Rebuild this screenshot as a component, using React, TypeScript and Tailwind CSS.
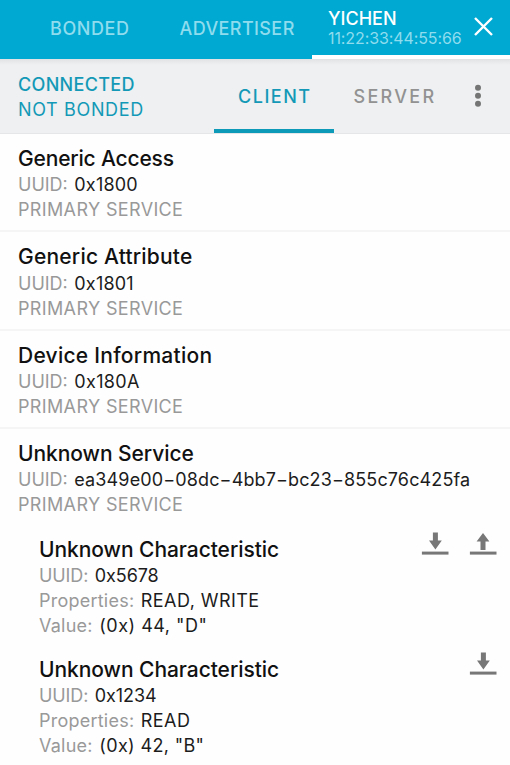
import React from "react";

type Field = { label: string; value?: string; labelTrack?: string; valueTrack?: string };

function Line({ label, value, labelTrack = "", valueTrack = "" }: Field) {
  return (
    <div className="flex h-[25px] items-center whitespace-pre text-[18px] leading-[25px]">
      <span className={`mr-[6.5px] text-[#999] ${labelTrack}`}>{label}</span>
      {value && <span className={`text-[#1c1c1c] ${valueTrack}`}>{value}</span>}
    </div>
  );
}

function Service({ name, uuid, track, uuidTrack, last }: { name: string; uuid: string; track: string; uuidTrack: string; last?: boolean }) {
  return (
    <section className={`px-[18px] pt-[11px] ${last ? "h-[98px]" : "h-[98.3px] border-b-2 border-[#f5f5f5]"}`}>
      <h2 className={`h-[27.3px] whitespace-nowrap text-[21px] font-medium leading-[28px] text-[#111] ${track}`}>{name}</h2>
      <Line label="UUID:" value={uuid} valueTrack={uuidTrack} />
      <Line label="PRIMARY SERVICE" labelTrack="tracking-[0.36px]" />
    </section>
  );
}

function Arrow({ up }: { up?: boolean }) {
  return (
    <svg className="-mt-[2.5px]" width="28" height="24" viewBox="0 0 28 24" fill="#777">
      {up ? <path d="M14 1 20.4 9.6H16.5V17.9H11.5V9.6H7.6Z" /> : <path d="M11.9 0.4H16.9V8.4H20.8L14.4 17.6 8 8.4H11.9Z" />}
      <rect x="0.9" y="19.6" width="26.6" height="3" />
    </svg>
  );
}

type CharacteristicProps = { uuid: string; props: string; value: string; valueTrack: string; write?: boolean };

function Characteristic({ uuid, props, value, valueTrack, write }: CharacteristicProps) {
  return (
    <section className="flex h-[120px] justify-between pl-[39px] pr-[13px] pt-[8px]">
      <div>
        <h3 className="h-[28px] whitespace-nowrap pt-px text-[21px] font-medium leading-[28px] tracking-[-0.06px] text-[#111]">Unknown Characteristic</h3>
        <Line label="UUID:" value={uuid} labelTrack="tracking-[-0.1px]" valueTrack="tracking-[-0.1px]" />
        <Line label="Properties:" value={props} labelTrack="tracking-[0.23px]" valueTrack="tracking-[0.45px]" />
        <Line label="Value:" value={value} labelTrack="tracking-[0.25px]" valueTrack={valueTrack} />
      </div>
      <div className="flex gap-[20px]">
        <Arrow />
        {write && <Arrow up />}
      </div>
    </section>
  );
}

export default function App() {
  return (
    <main className="h-[765px] w-[510px] overflow-hidden bg-[#fefefe] font-['Inter',sans-serif]">
      <nav className="flex h-[59px] bg-[#00a9d1] text-[18px] font-medium text-[#8fdcee]">
        <div className="w-[179.5px] pl-[50px] pt-[16px] leading-[25px] tracking-[0.6px]">BONDED</div>
        <div className="w-[132.5px] pt-[16px] leading-[25px] tracking-[0.4px]">ADVERTISER</div>
        <div className="flex w-[198px] justify-between border-b-4 border-white pl-[16px] pr-[17px]">
          <div>
            <div className="mt-[8px] h-[21px] leading-[21px] text-white">YICHEN</div>
            <div className="h-[17px] text-[16px] font-normal leading-[19px] tracking-[-0.1px]">11:22:33:44:55:66</div>
          </div>
          <svg className="mt-[17px]" width="19" height="19" viewBox="0 0 19 19" fill="none" stroke="white" strokeWidth="2.4">
            <path d="M1 1 18 18M18 1 1 18" />
          </svg>
        </div>
      </nav>
      <header className="flex h-[75px] border-b border-[#e4e6e7] bg-[#eef0f1] bg-linear-to-b from-[#e0e2e3] to-[#eef0f1] to-8% text-[18px]">
        <div className="w-[214px] pl-[18px] pt-[13px] leading-[25px] text-[#1399b7]">
          <div className="font-medium tracking-[0.32px]">CONNECTED</div>
          <div className="tracking-[0.65px]">NOT BONDED</div>
        </div>
        <div className="w-[120px] border-b-4 border-[#0c9ab8] pl-[24px] pt-[25px] font-medium leading-[25px] tracking-[1.5px] text-[#1399b7]">CLIENT</div>
        <div className="w-[139px] pl-[19.5px] pt-[25px] font-medium leading-[25px] tracking-[2.3px] text-[#929292]">SERVER</div>
        <svg className="mt-[25px]" width="10" height="24" viewBox="0 0 10 24" fill="#757575">
          <circle cx="5" cy="3.8" r="3" />
          <circle cx="5" cy="11.8" r="3" />
          <circle cx="5" cy="19.8" r="3" />
        </svg>
      </header>
      <Service name="Generic Access" uuid="0x1800" track="tracking-[-0.18px]" uuidTrack="tracking-[0.2px]" />
      <Service name="Generic Attribute" uuid="0x1801" track="tracking-[0.2px]" uuidTrack="tracking-[0.2px]" />
      <Service name="Device Information" uuid="0x180A" track="tracking-[0.26px]" uuidTrack="tracking-[0.35px]" />
      <Service name="Unknown Service" uuid="ea349e00−08dc−4bb7−bc23−855c76c425fa" track="tracking-[-0.06px]" uuidTrack="tracking-[0.13px]" last />
      <Characteristic uuid="0x5678" props="READ, WRITE" value={'(0x) 44, "D"'} valueTrack="tracking-[0.5px]" write />
      <Characteristic uuid="0x1234" props="READ" value={'(0x) 42, "B"'} valueTrack="tracking-[0.35px]" />
    </main>
  );
}
